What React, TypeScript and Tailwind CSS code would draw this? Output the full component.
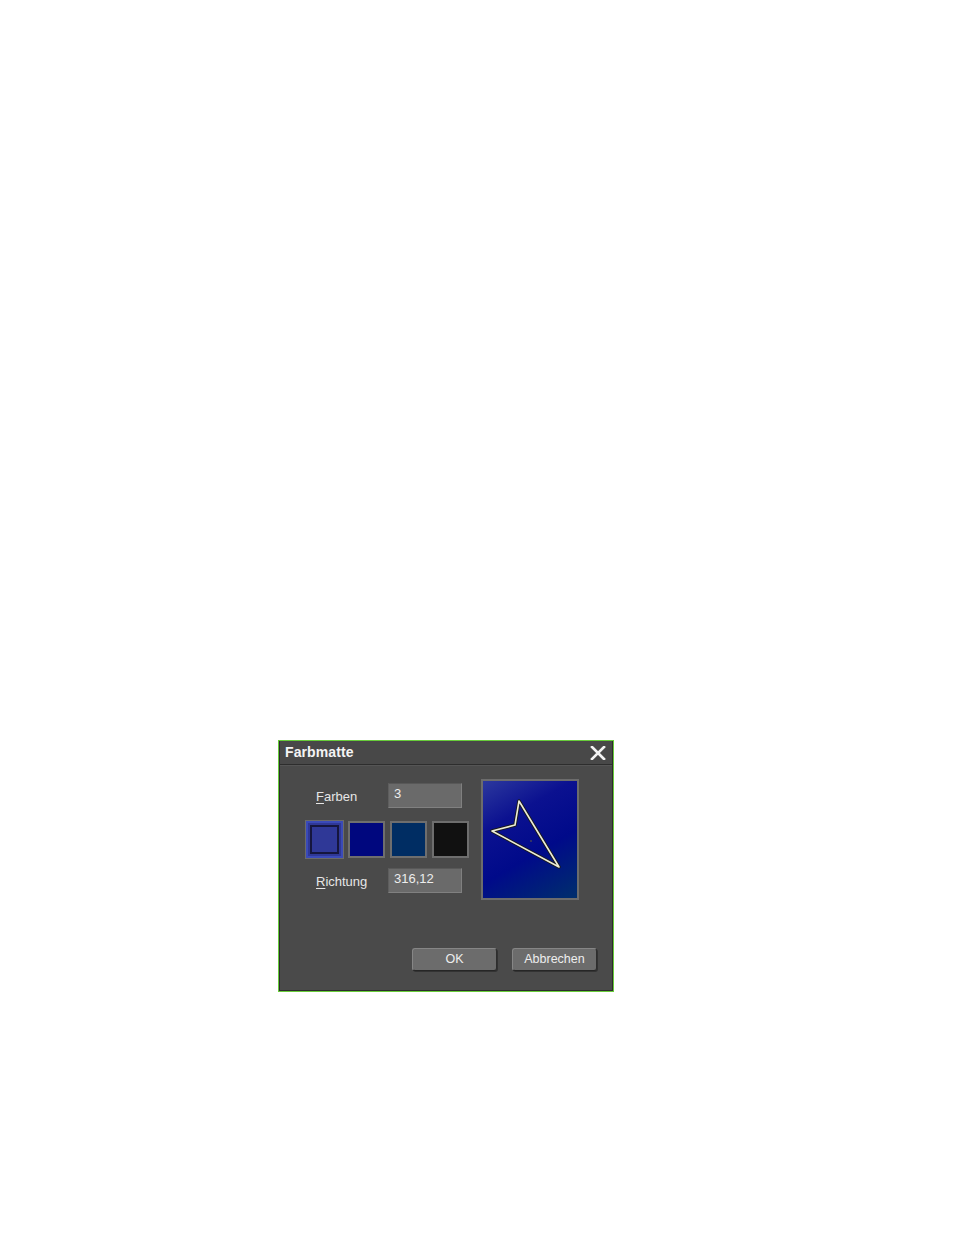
const SWATCHES = [
  { color: '#2f3897', selected: true },
  { color: '#00077e', selected: false },
  { color: '#002d63', selected: false },
  { color: '#111111', selected: false },
]

function Field({ label, hotkey, value }: { label: string; hotkey: string; value: string }) {
  return (
    <div className="flex items-center pl-[10px]">
      <span className="w-[72px] text-[13px] text-[#e6e6e6] pt-[2px]">
        <span className="underline underline-offset-2">{hotkey}</span>
        {label}
      </span>
      <div className="w-[74px] h-[25px] bg-[#6a6a6a] border border-[#808080] border-t-[#585858] border-l-[#5e5e5e] pl-[5px] text-[13px] leading-[20px] text-[#ededed]">
        {value}
      </div>
    </div>
  )
}

function Button({ children }: { children: string }) {
  return (
    <button className="w-[85px] h-[23px] rounded-[3px] bg-[#6c6c6c] border border-[#868686] border-b-[#262626] border-r-[#2e2e2e] shadow-[1px_1px_0_#333] text-[12.5px] text-[#eeeeee] leading-none">
      {children}
    </button>
  )
}

export default function App() {
  return (
    <div className="w-[954px] h-[1235px] bg-white pt-[740px] pl-[278px]" style={{ fontFamily: '"Liberation Sans", Arial, sans-serif' }}>
      <div className="w-[336px] h-[252px] border border-[#68cc3a] bg-[#4a4a4a]">
        <div className="h-full flex flex-col border-l border-r border-b border-[#2c2c2c]">
          {/* Title bar */}
          <div className="h-[24px] flex items-center justify-between pl-[5px] pr-[6px] bg-[#484848] border-b border-[#2d2d2d] shadow-[0_1px_0_#555]">
            <span className="text-[14px] font-bold text-[#f4f4f4] tracking-[0.1px]">Farbmatte</span>
            <svg width="16" height="14" viewBox="0 0 16 14">
              <path d="M2 1 L14 13 M14 1 L2 13" stroke="#f4f4f4" strokeWidth="2.6" strokeLinecap="square" />
            </svg>
          </div>

          {/* Body */}
          <div className="flex-1 flex flex-col">
            <div className="flex items-start pl-[26px] pt-[14px] gap-[12px]">
              <div className="flex flex-col mt-[4px]">
                <Field hotkey="F" label="arben" value="3" />
                <div className="flex gap-[5px] mt-[13px]">
                  {SWATCHES.map(s => (
                    <div
                      key={s.color}
                      className={
                        s.selected
                          ? 'w-[37px] h-[37px] border-2 border-[#3a4ab8] p-[2px] shadow-[0_0_0_1px_#6a6a6a]'
                          : 'w-[37px] h-[37px] border-2 border-[#6e6e6e]'
                      }
                      style={{ backgroundColor: s.color }}
                    >
                      {s.selected && <div className="w-full h-full border-2 border-[#15163e]" />}
                    </div>
                  ))}
                </div>
                <div className="mt-[10px]">
                  <Field hotkey="R" label="ichtung" value="316,12" />
                </div>
              </div>

              {/* Preview */}
              <div className="w-[98px] h-[121px] border-2 border-[#6c6c6c] bg-[linear-gradient(150deg,#2c389e_0%,#0b1190_30%,#000a8a_60%,#002f6c_100%)]">
                <svg width="94" height="117" viewBox="0 0 94 117">
                  <polygon points="36,20 32,44 9,50 76,86" fill="none" stroke="#1a1a1a" strokeWidth="3.4" strokeLinejoin="round" />
                  <polygon points="36,20 32,44 9,50 76,86" fill="none" stroke="#ececd8" strokeWidth="1.6" strokeLinejoin="round" />
                  <rect x="47" y="59" width="2" height="2" fill="#333366" />
                </svg>
              </div>
            </div>

            <div className="mt-auto flex justify-end gap-[15px] pr-[15px] pb-[19px]">
              <Button>OK</Button>
              <Button>Abbrechen</Button>
            </div>
          </div>
        </div>
      </div>
    </div>
  )
}
